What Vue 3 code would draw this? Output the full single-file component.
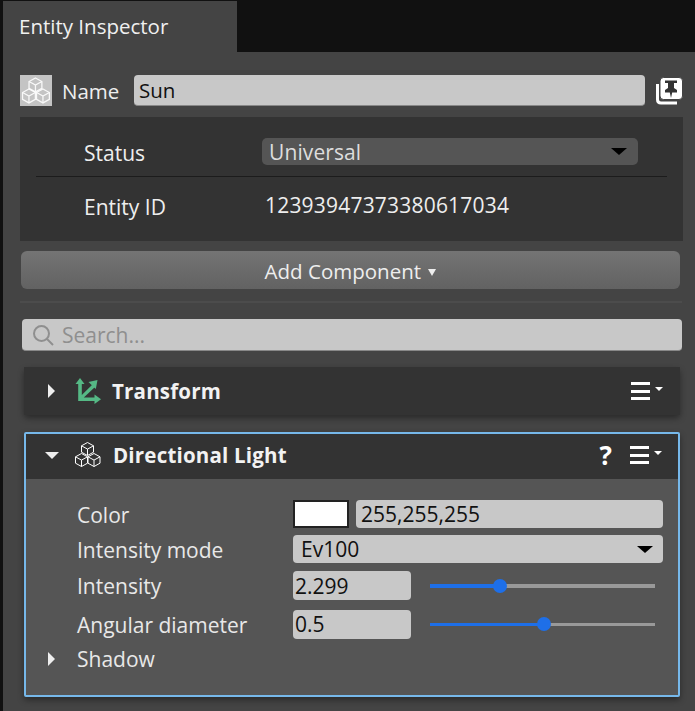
<script setup>
const bigCubes = [
  { x: 8.5, y: 3 },
  { x: 2, y: 14 },
  { x: 16, y: 14 },
]
const smallCubes = [
  { x: 6, y: 0.5 },
  { x: 0, y: 11.5 },
  { x: 12.5, y: 11.5 },
]
</script>

<template>
  <div class="page">
    <div class="tabbar">
      <div class="tab">Entity Inspector</div>
    </div>

    <div class="panel">
      <div class="name-row">
        <div class="entity-icon">
          <svg width="32" height="31" viewBox="0 0 32 31">
            <g v-for="c in bigCubes" :key="c.x" :transform="`translate(${c.x} ${c.y}) scale(1.07)`" fill="none" stroke="#fff" stroke-width="1.2" opacity="0.9">
              <path d="M6.5 0 L12.5 3.3 V9.7 L6.5 13 L0.5 9.7 V3.3 Z" />
              <path d="M0.5 3.3 L6.5 6.6 L12.5 3.3 M6.5 6.6 V13" />
            </g>
          </svg>
        </div>
        <span class="name-label">Name</span>
        <div class="field name-field">Sun</div>
        <svg class="pin" width="27" height="28" viewBox="0 0 27 28">
          <path d="M1.5 7 V22.5 Q1.5 26 5 26 H21" fill="none" stroke="#fff" stroke-width="3" />
          <rect x="4" y="0.5" width="22.5" height="22" rx="3.5" fill="#fff" stroke="#444" stroke-width="1" />
          <path d="M9 3.5 H21 V6 H18 V11 L21 13 V15.5 H16.2 L15 21 L13.8 15.5 H9 V13 L12 11 V6 H9 Z" fill="#333" />
        </svg>
      </div>

      <div class="status-box">
        <div class="status-row">
          <span class="status-label status-first">Status</span>
          <div class="status-select">
            <span>Universal</span>
            <i class="caret"></i>
          </div>
        </div>
        <div class="id-row">
          <span class="status-label">Entity ID</span>
          <span class="id-value">12393947373380617034</span>
        </div>
      </div>

      <button class="add-btn">Add Component <i class="add-caret"></i></button>
      <div class="sep"></div>

      <div class="field search">
        <svg width="22" height="22" viewBox="0 0 22 22" fill="none" stroke="#8f8f8f" stroke-width="2">
          <circle cx="9.5" cy="9.5" r="7.5" />
          <path d="M15 15 L21 21" />
        </svg>
        <span class="search-text">Search...</span>
      </div>

      <section class="card collapsed">
        <div class="card-head">
          <i class="tri-right"></i>
          <svg class="head-icon closed-icon" width="26" height="26" viewBox="0 0 26 26" fill="#55b985">
            <path d="M3.2 4 H6.8 V17 L17.5 6.5 L20 9 L8.8 19.5 H21 V23 H3.2 Z" />
            <path d="M5 0 L9.5 6 H0.5 Z" />
            <path d="M26 21.2 L19.5 16.5 V26 Z" />
            <path d="M22.5 2 L20.8 11 L13.5 4 Z" />
          </svg>
          <span class="card-title">Transform</span>
          <span class="menu"><b></b><b></b><b></b><i></i></span>
        </div>
      </section>

      <section class="card active">
        <div class="card-head open">
          <i class="tri-down"></i>
          <svg class="head-icon" width="26" height="26" viewBox="0 0 26 26">
            <g v-for="c in smallCubes" :key="c.x" :transform="`translate(${c.x} ${c.y})`" fill="none" stroke="#fff" stroke-width="1">
              <path d="M6.5 0 L12.5 3.3 V9.7 L6.5 13 L0.5 9.7 V3.3 Z" />
              <path d="M0.5 3.3 L6.5 6.6 L12.5 3.3 M6.5 6.6 V13" />
            </g>
          </svg>
          <span class="card-title">Directional Light</span>
          <span class="help">?</span>
          <span class="menu"><b></b><b></b><b></b><i></i></span>
        </div>
        <div class="card-body">
          <div class="prop prop-color">
            <span class="prop-label">Color</span>
            <div class="swatch"></div>
            <div class="field prop-wide">255,255,255</div>
          </div>
          <div class="prop prop-mode">
            <span class="prop-label">Intensity mode</span>
            <div class="field prop-select">
              <span>Ev100</span>
              <i class="caret"></i>
            </div>
          </div>
          <div class="prop prop-intensity">
            <span class="prop-label">Intensity</span>
            <div class="field prop-num">2.299</div>
            <div class="slider thick">
              <div class="fill" style="width: 31%"></div>
              <div class="knob"></div>
            </div>
          </div>
          <div class="prop prop-angular">
            <span class="prop-label">Angular diameter</span>
            <div class="field prop-num">0.5</div>
            <div class="slider">
              <div class="fill" style="width: 50.5%"></div>
              <div class="knob"></div>
            </div>
          </div>
          <div class="shadow-row">
            <i class="tri-right"></i>
            <span class="prop-label">Shadow</span>
          </div>
        </div>
      </section>
    </div>
  </div>
</template>

<style>
html, body {
  margin: 0;
  background: #444;
}
</style>

<style scoped>
.page {
  width: 695px;
  height: 711px;
  overflow: hidden;
  background: #444;
  border-left: 3px solid #111;
  box-sizing: border-box;
  font-family: "Open Sans", sans-serif;
  font-size: 21px;
  color: #eee;
}

.tabbar {
  height: 52px;
  background: #111;
  padding-top: 1px;
  box-sizing: border-box;
}

.tab {
  width: 234px;
  height: 51px;
  background: #444;
  box-sizing: border-box;
  padding: 11px 0 0 16px;
  line-height: 28px;
  font-size: 20.5px;
  color: #f0f0f0;
}

.panel {
  padding: 23px 0 0 17px;
}

.name-row {
  display: flex;
  align-items: center;
  height: 31px;
}

.entity-icon {
  width: 32px;
  height: 31px;
  background: #c4c4c4;
  margin-right: 10px;
}

.name-label {
  width: 72px;
  font-size: 20.5px;
}

.field {
  background: #c8c8c8;
  border-radius: 4px;
  color: #111;
  box-sizing: border-box;
  line-height: 28px;
  display: flex;
  align-items: center;
}

.name-field {
  width: 511px;
  height: 31px;
  padding-left: 5px;
  border-bottom: 1px solid #888;
  font-size: 20.5px;
}

.pin {
  margin-left: 11px;
}

.status-box {
  width: 663px;
  height: 124px;
  margin-top: 11px;
  background: #333;
  box-sizing: border-box;
  padding: 21px 16px 0;
}

.status-row {
  display: flex;
  align-items: center;
  height: 27px;
  padding-bottom: 11px;
  border-bottom: 1px solid #1c1c1c;
  box-sizing: content-box;
  width: 631px;
}

.status-label {
  width: 178px;
  margin-left: 48px;
  color: #eee;
  flex: none;
}

.status-first {
  padding-top: 2px;
}

.status-select {
  width: 376px;
  height: 27px;
  background: #555;
  border-radius: 5px;
  box-sizing: border-box;
  padding: 0 11px 0 7px;
  display: flex;
  align-items: center;
  justify-content: space-between;
  color: #ddd;
  letter-spacing: 0.1px;
}

.caret {
  width: 0;
  height: 0;
  border-left: 8px solid transparent;
  border-right: 8px solid transparent;
  border-top: 7px solid #000;
}

.id-row {
  display: flex;
  align-items: center;
  height: 60px;
}

.id-value {
  color: #eee;
  font-size: 21px;
  letter-spacing: 0.2px;
  margin-left: 3px;
  padding-bottom: 4px;
}

.add-btn {
  display: block;
  width: 659px;
  height: 38px;
  margin: 10px 0 0 1px;
  padding: 2px 0 0;
  border: none;
  border-radius: 6px;
  background: linear-gradient(#747474, #626262);
  color: #eee;
  font-family: inherit;
  font-size: 20.5px;
}

.add-caret {
  display: inline-block;
  width: 0;
  height: 0;
  margin-left: 2px;
  vertical-align: 3px;
  border-left: 4px solid transparent;
  border-right: 4px solid transparent;
  border-top: 7px solid #eee;
}

.sep {
  width: 662px;
  height: 2px;
  margin-top: 12px;
  background: #4c4c4c;
}

.search {
  width: 660px;
  height: 32px;
  margin: 16px 0 0 2px;
  padding-left: 10px;
  gap: 8px;
  color: #8f8f8f;
  border-bottom: 1px solid #888;
}

.search-text {
  padding-top: 1px;
}

.card {
  width: 656px;
  margin-left: 4px;
  border-radius: 4px;
  box-shadow: 0 3px 6px rgba(0, 0, 0, 0.4);
  box-sizing: border-box;
  background: #333;
}

.collapsed {
  height: 48px;
  margin-top: 16px;
}

.active {
  height: 265px;
  margin-top: 17px;
  border: 2px solid #76b8ea;
  border-radius: 2px;
  background: #555;
  overflow: hidden;
}

.card-head {
  display: flex;
  align-items: center;
  height: 48px;
  padding: 0 17px 0 24px;
  background: #333;
  position: relative;
}

.card-head.open {
  height: 45px;
  padding: 0 16px 3px 20px;
  box-sizing: border-box;
}

.tri-right {
  width: 0;
  height: 0;
  border-top: 7px solid transparent;
  border-bottom: 7px solid transparent;
  border-left: 7px solid #eee;
  margin-right: 20px;
  flex: none;
}

.tri-down {
  width: 0;
  height: 0;
  border-left: 7px solid transparent;
  border-right: 7px solid transparent;
  border-top: 7px solid #eee;
  margin-left: -1px;
  margin-right: 16px;
  flex: none;
}

.head-icon {
  margin-right: 12px;
  flex: none;
}

.closed-icon {
  margin-right: 11px;
}

.card-title {
  flex: 1;
  font-weight: 700;
  font-size: 20.5px;
  color: #f2f2f2;
  letter-spacing: 0.2px;
}

.help {
  font-weight: 700;
  font-size: 26px;
  line-height: 1;
  color: #fff;
  margin-right: 18px;
}

.menu {
  position: relative;
  width: 32px;
  height: 18px;
  display: flex;
  flex-direction: column;
  justify-content: space-between;
}

.menu b {
  display: block;
  width: 19px;
  height: 3px;
  background: #fff;
}

.menu i {
  position: absolute;
  top: 5px;
  right: 0;
  width: 0;
  height: 0;
  border-left: 4px solid transparent;
  border-right: 4px solid transparent;
  border-top: 4px solid #fff;
}

.card-body {
  padding: 21px 0 0 51px;
}

.prop {
  display: flex;
  align-items: center;
}

.prop-label {
  color: #e8e8e8;
}

.prop > .prop-label {
  width: 216px;
  flex: none;
  padding-top: 1px;
  box-sizing: border-box;
}

.prop-color {
  height: 28px;
}

.prop-mode {
  height: 28px;
  margin-top: 7px;
}

.prop-intensity {
  height: 29px;
  margin-top: 8px;
}

.prop-angular {
  height: 28px;
  margin-top: 10px;
}

.swatch {
  width: 56px;
  height: 28px;
  background: #fff;
  border: 2px solid #222;
  box-sizing: border-box;
  flex: none;
}

.prop-wide {
  width: 307px;
  height: 28px;
  margin-left: 7px;
  padding-left: 5px;
}

.prop-select {
  width: 370px;
  height: 28px;
  padding: 0 10px 0 8px;
  justify-content: space-between;
}

.prop-num {
  width: 118px;
  height: 29px;
  padding-left: 2px;
  flex: none;
}

.slider {
  position: relative;
  width: 225px;
  height: 3px;
  margin-left: 19px;
  background: #999;
}

.slider.thick {
  height: 4px;
}

.fill {
  height: 100%;
  background: #1e6fe8;
}

.knob {
  position: absolute;
  top: 50%;
  left: 31%;
  width: 14px;
  height: 14px;
  margin: -7px 0 0 -7px;
  border-radius: 50%;
  background: #1e6fe8;
}

.prop-angular .knob {
  left: 50.5%;
}

.shadow-row {
  display: flex;
  align-items: center;
  height: 28px;
  margin: 7px 0 0 -29px;
}

.shadow-row .tri-right {
  margin-right: 22px;
}
</style>
